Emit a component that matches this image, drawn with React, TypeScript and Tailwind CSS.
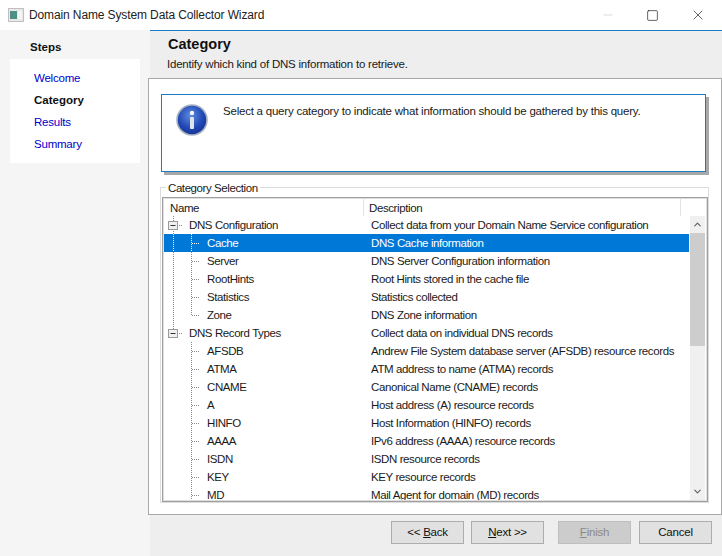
import { Minus, Square, X, ChevronUp, ChevronDown } from 'lucide-react';

const rows = [
  { name: 'DNS Configuration', desc: 'Collect data from your Domain Name Service configuration', level: 0 },
  { name: 'Cache', desc: 'DNS Cache information', level: 1, selected: true },
  { name: 'Server', desc: 'DNS Server Configuration information', level: 1 },
  { name: 'RootHints', desc: 'Root Hints stored in the cache file', level: 1 },
  { name: 'Statistics', desc: 'Statistics collected', level: 1 },
  { name: 'Zone', desc: 'DNS Zone information', level: 1, last: true },
  { name: 'DNS Record Types', desc: 'Collect data on individual DNS records', level: 0, last: true },
  { name: 'AFSDB', desc: 'Andrew File System database server (AFSDB) resource records', level: 2 },
  { name: 'ATMA', desc: 'ATM address to name (ATMA) records', level: 2 },
  { name: 'CNAME', desc: 'Canonical Name (CNAME) records', level: 2 },
  { name: 'A', desc: 'Host address (A) resource records', level: 2 },
  { name: 'HINFO', desc: 'Host Information (HINFO) records', level: 2 },
  { name: 'AAAA', desc: 'IPv6 address (AAAA) resource records', level: 2 },
  { name: 'ISDN', desc: 'ISDN resource records', level: 2 },
  { name: 'KEY', desc: 'KEY resource records', level: 2 },
  { name: 'MD', desc: 'Mail Agent for domain (MD) records', level: 2 },
];

// dotted connectors and the +/- box of one tree row
function TreeLines({ level, last, selected }: { level: number; last?: boolean; selected?: boolean }) {
  const c = selected ? '#ffffff' : '#8a8a8a';
  const dash = '1 1';
  if (level === 0) {
    return (
      <svg width="24" height="18" className="shrink-0">
        <path d="M9.5 0V5" stroke={c} strokeDasharray={dash} />
        {!last && <path d="M9.5 13V18" stroke={c} strokeDasharray={dash} />}
        <path d="M13 9.5H19" stroke={c} strokeDasharray={dash} />
        <rect x="4.5" y="5.5" width="9" height="8" fill="#f0f0f0" stroke="#9a9a9a" />
        <path d="M6.5 9.5H11.5" stroke="#333333" />
      </svg>
    );
  }
  return (
    <svg width="42" height="18" className="shrink-0">
      {level === 1 && <path d="M9.5 0V18" stroke={c} strokeDasharray={dash} />}
      <path d={last ? 'M27.5 0V9' : 'M27.5 0V18'} stroke={c} strokeDasharray={dash} />
      <path d="M28 9.5H36" stroke={c} strokeDasharray={dash} />
    </svg>
  );
}

function WizButton({ children, disabled }: { children: React.ReactNode; disabled?: boolean }) {
  return (
    <button
      className={
        disabled
          ? 'h-[23px] w-[73px] border border-[#bfbfbf] bg-[#cccccc] text-[#8a8a8a]'
          : 'h-[23px] w-[73px] border border-[#adadad] bg-[#e1e1e1] text-[#111111]'
      }
    >
      {children}
    </button>
  );
}

export default function App() {
  return (
    <div className="flex h-[556px] w-[722px] flex-col overflow-hidden bg-white font-['Liberation_Sans',sans-serif] text-[11.5px] tracking-[-0.22px] text-[#1a1a1a]">
      {/* title bar */}
      <div className="flex h-[30px] shrink-0 items-center pl-2">
        <svg width="16" height="14" viewBox="0 0 16 14" className="shrink-0">
          <rect x="0.5" y="0.5" width="15" height="13" fill="#e8e8e8" stroke="#c0c0c0" />
          <rect x="2" y="3" width="7" height="8" fill="#4f8f86" />
          <rect x="10" y="3" width="4" height="8" fill="#f4f6f6" />
        </svg>
        <span className="ml-[5px] text-[12px] tracking-[-0.12px] text-[#222222]">Domain Name System Data Collector Wizard</span>
        <div className="ml-auto flex items-center">
          <Minus size={14} strokeWidth={1} className="mr-[31px] text-[#c4c4c4]" />
          <Square size={13} strokeWidth={1.2} className="mr-[31px] text-[#111111]" />
          <X size={16} strokeWidth={1} className="mr-[16px] text-[#111111]" />
        </div>
      </div>

      <div className="flex flex-1">
        {/* steps */}
        <div className="w-[150px] shrink-0 bg-[#f5f5f5] pt-[8px]">
          <div className="h-[21px] pl-[30px] font-bold leading-[18px] tracking-normal text-[#111111]">Steps</div>
          <div className="mx-[10px] flex h-[104px] flex-col bg-white pl-[24px] pt-[8px]">
            <a className="h-[22px] leading-[22px] text-[#0000cc]">Welcome</a>
            <span className="h-[22px] font-bold leading-[22px] tracking-normal text-[#111111]">Category</span>
            <a className="h-[22px] leading-[22px] text-[#0000cc]">Results</a>
            <a className="h-[22px] leading-[22px] text-[#0000cc]">Summary</a>
          </div>
        </div>

        {/* page */}
        <div className="flex flex-1 flex-col border-t border-[#1b7cc4] bg-[#eeeeef]">
          <div className="h-[47px] shrink-0 pl-[18px] pt-[3px]">
            <div className="h-[22px] text-[14.5px] font-bold leading-[20px] tracking-normal text-[#111111]">Category</div>
            <div className="-ml-px leading-[17px]">Identify which kind of DNS information to retrieve.</div>
          </div>

          <div className="-ml-[2px] mr-[1px] flex h-[437px] flex-col border border-[#a9a9a9] bg-white px-[12px] pt-[15px]">
            {/* info box */}
            <div className="flex h-[78px] w-[545px] shrink-0 border border-[#1b7cc4] bg-white pl-[14px] pt-[9px] shadow-[3px_3px_0_#a8a8a8]">
              <svg width="32" height="32" viewBox="0 0 32 32" className="shrink-0">
                <defs>
                  <radialGradient id="ball" cx="45%" cy="35%" r="70%">
                    <stop offset="0%" stopColor="#5f8de0" />
                    <stop offset="60%" stopColor="#2148b5" />
                    <stop offset="100%" stopColor="#142f8c" />
                  </radialGradient>
                </defs>
                <circle cx="16" cy="16" r="15" fill="url(#ball)" stroke="#a9b2c0" strokeWidth="1.6" />
                <circle cx="16" cy="9" r="2.2" fill="#f4f6fa" />
                <rect x="14" y="13" width="4" height="12" rx="1" fill="#dfe4ec" />
              </svg>
              <div className="ml-[15px] leading-[14px]">
                Select a query category to indicate what information should be gathered by this query.
              </div>
            </div>

            {/* group box */}
            <div className="relative ml-[-1px] mt-[15px] h-[316px] w-[549px] border border-[#dcdcdc] pl-[1px] pt-[9px]">
              <span className="absolute -top-[7px] left-[5px] bg-white px-[2px] leading-[15px] tracking-[-0.42px]">Category Selection</span>
              <div className="flex h-[305px] w-[546px] flex-col overflow-hidden border border-[#a0a0a0] p-px tracking-[-0.4px] shadow-[inset_0_0_0_1px_#dedede]">
                <div className="flex h-[17px] shrink-0 items-center leading-[19px]">
                  <div className="h-full w-[200px] shrink-0 border-r border-[#e3e3e3] pl-[6px]">Name</div>
                  <div className="h-full w-[317px] shrink-0 border-r border-[#e3e3e3] pl-[5px]">Description</div>
                </div>
                <div className="flex min-h-0 flex-1">
                  <div className="mr-px w-[525px] shrink-0 overflow-hidden">
                    {rows.map((r) => (
                      <div
                        key={r.name}
                        className={r.selected ? 'flex h-[18px] items-center bg-[#0078d7] text-white' : 'flex h-[18px] items-center'}
                      >
                        <TreeLines level={r.level} last={r.last} selected={r.selected} />
                        <span className={r.level === 0 ? 'w-[183px] shrink-0 whitespace-nowrap pl-[1px] pt-[2px]' : 'w-[165px] shrink-0 whitespace-nowrap pl-[1px] pt-[2px]'}>
                          {r.name}
                        </span>
                        <span className="whitespace-nowrap pt-[2px]">{r.desc}</span>
                      </div>
                    ))}
                  </div>
                  {/* scrollbar */}
                  <div className="flex w-[15px] shrink-0 flex-col items-center bg-[#f0f0f0]">
                    <div className="flex h-[17px] shrink-0 items-center justify-center">
                      <ChevronUp size={11} strokeWidth={2.5} className="text-[#606060]" />
                    </div>
                    <div className="h-[113px] w-full shrink-0 bg-[#cdcdcd]" />
                    <div className="mt-auto flex h-[17px] shrink-0 items-center justify-center">
                      <ChevronDown size={11} strokeWidth={2.5} className="text-[#606060]" />
                    </div>
                  </div>
                </div>
              </div>
            </div>
          </div>

          {/* buttons */}
          <div className="flex flex-1 items-start pl-[241px] pt-[6px]">
            <WizButton>
              {'<< '}
              <u>B</u>ack
            </WizButton>
            <div className="w-[7px]" />
            <WizButton>
              <u>N</u>ext {'>>'}
            </WizButton>
            <div className="w-[14px]" />
            <WizButton disabled>
              <u>F</u>inish
            </WizButton>
            <div className="w-[8px]" />
            <WizButton>Cancel</WizButton>
          </div>
        </div>
      </div>
    </div>
  );
}
